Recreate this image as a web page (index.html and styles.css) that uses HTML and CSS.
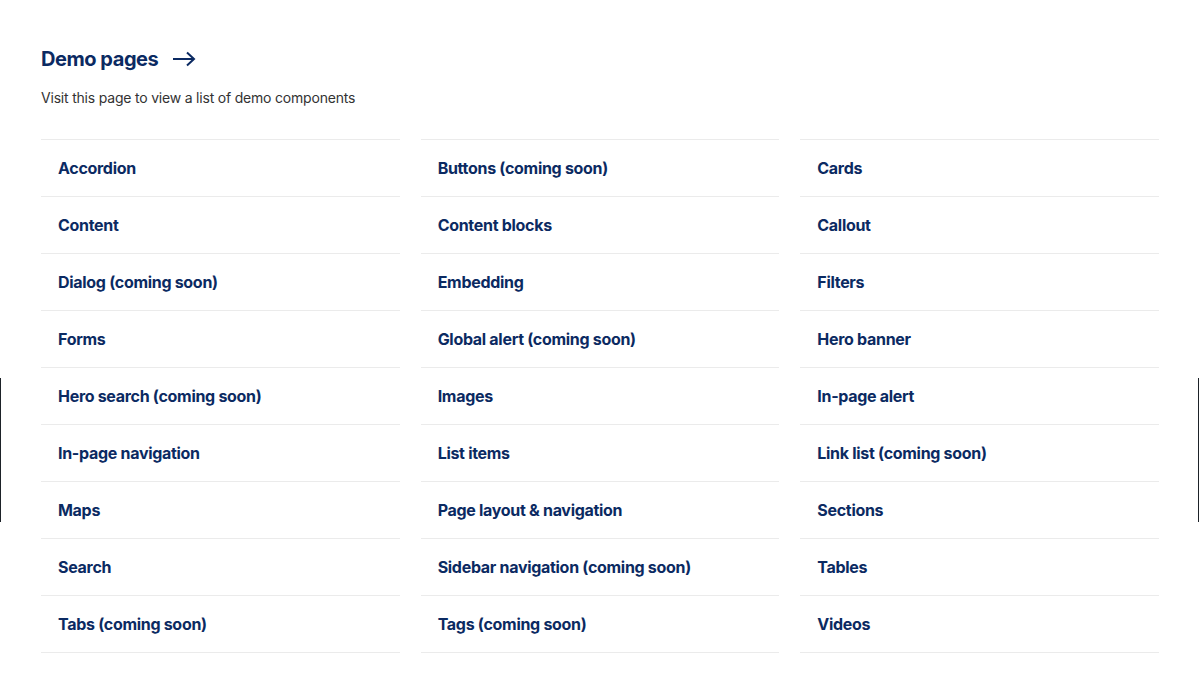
FILE: index.html
```html
<!DOCTYPE html>
<html lang="en">
<head>
  <meta charset="UTF-8" />
  <meta name="viewport" content="width=device-width, initial-scale=1.0"/>
  <title>Demo pages</title>
  <link rel="stylesheet" href="styles.css">
</head>
<body>
  <div class="edge edge-left"></div>
  <div class="edge edge-right"></div>

  <main class="page">
    <a class="title-link" href="#">
      <h2>Demo pages</h2>
      <svg class="arrow" width="24" height="16" viewBox="0 0 24 16" aria-hidden="true">
        <path d="M1 8 H22 M15 1.5 L22 8 L15 14.5" fill="none" stroke="currentColor" stroke-width="2"/>
      </svg>
    </a>
    <p class="intro">Visit this page to view a list of demo components</p>

    <ul class="link-grid">
      <li><a href="#">Accordion</a></li>
      <li><a href="#">Buttons (coming soon)</a></li>
      <li><a href="#">Cards</a></li>
      <li><a href="#">Content</a></li>
      <li><a href="#">Content blocks</a></li>
      <li><a href="#">Callout</a></li>
      <li><a href="#">Dialog (coming soon)</a></li>
      <li><a href="#">Embedding</a></li>
      <li><a href="#">Filters</a></li>
      <li><a href="#">Forms</a></li>
      <li><a href="#">Global alert (coming soon)</a></li>
      <li><a href="#">Hero banner</a></li>
      <li><a href="#">Hero search (coming soon)</a></li>
      <li><a href="#">Images</a></li>
      <li><a href="#">In-page alert</a></li>
      <li><a href="#">In-page navigation</a></li>
      <li><a href="#">List items</a></li>
      <li><a href="#">Link list (coming soon)</a></li>
      <li><a href="#">Maps</a></li>
      <li><a href="#">Page layout &amp; navigation</a></li>
      <li><a href="#">Sections</a></li>
      <li><a href="#">Search</a></li>
      <li><a href="#">Sidebar navigation (coming soon)</a></li>
      <li><a href="#">Tables</a></li>
      <li><a href="#">Tabs (coming soon)</a></li>
      <li><a href="#">Tags (coming soon)</a></li>
      <li><a href="#">Videos</a></li>
    </ul>
  </main>
</body>
</html>
```

FILE: styles.css
```css
* {
  box-sizing: border-box;
  margin: 0;
  padding: 0;
}

html, body {
  width: 100%;
  height: 100%;
  overflow: hidden;
  font-family: Inter, 'Noto Sans', Arial, sans-serif;
  background: #fff;
  color: #22272b;
}

.page {
  padding: 45px 41px 0 41px;
}

.title-link {
  display: inline-flex;
  align-items: center;
  gap: 14px;
  color: #0b2a62;
  text-decoration: none;
}

.title-link h2 {
  font-size: 20px;
  line-height: 28px;
  font-weight: 700;
  letter-spacing: -0.45px;
}

.arrow {
  display: block;
}

.intro {
  margin-top: 15px;
  font-size: 14px;
  line-height: 20px;
  letter-spacing: -0.2px;
  color: #333;
}

.link-grid {
  list-style: none;
  display: grid;
  grid-template-columns: repeat(3, 1fr);
  column-gap: 21px;
  margin-top: 31px;
  width: 1118px;
}

.link-grid li {
  border-top: 1px solid #ebebeb;
}

.link-grid li:nth-last-child(-n+3) {
  border-bottom: 1px solid #ebebeb;
}

.link-grid a {
  display: block;
  padding: 16px 16px 16px 17px;
  font-size: 16px;
  line-height: 24px;
  font-weight: 700;
  letter-spacing: -0.3px;
  color: #0b2a62;
  text-decoration: none;
}

.edge {
  position: fixed;
  top: 378px;
  height: 144px;
  width: 1px;
  background: #1d2228;
}

.edge-left { left: 0; }
.edge-right { right: 1px; }
```
